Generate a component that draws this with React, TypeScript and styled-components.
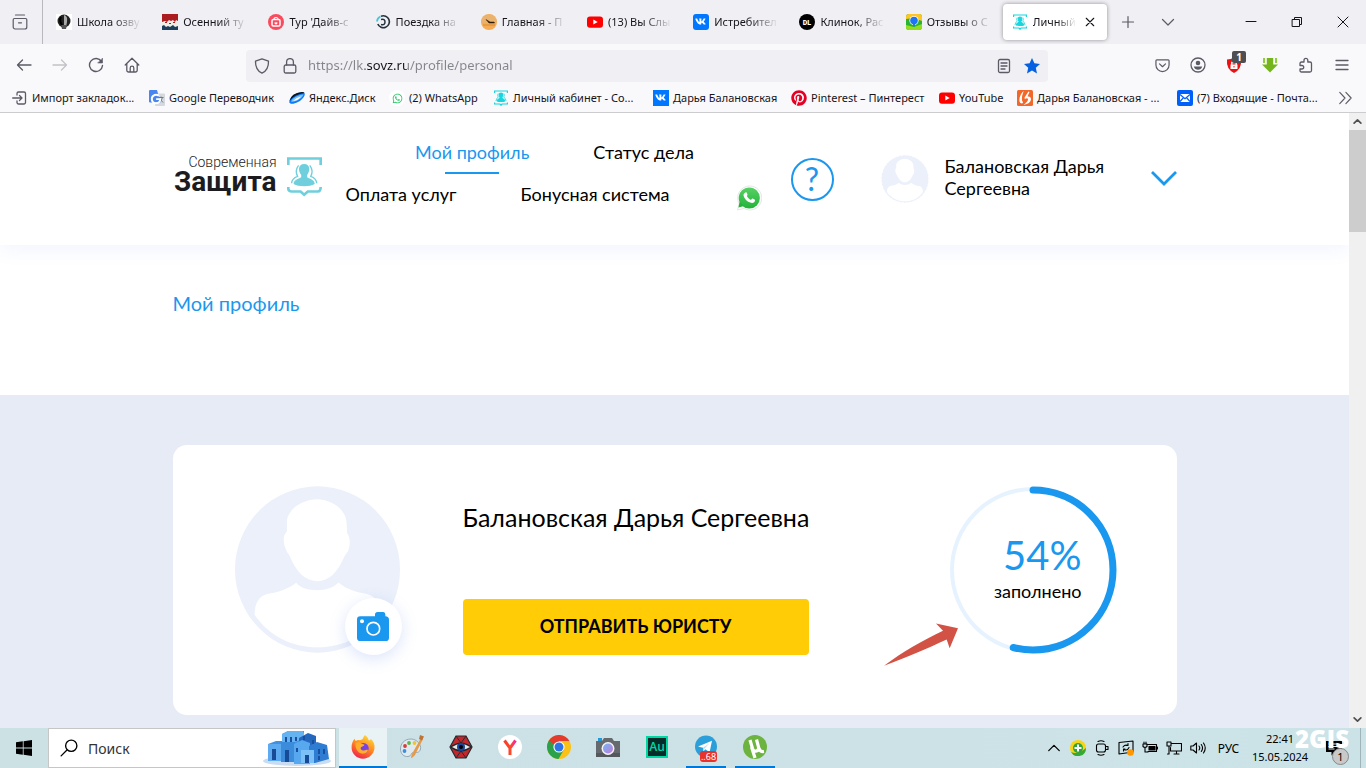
import React from 'react';
import styled, { createGlobalStyle, css } from 'styled-components';
import { FaWhatsapp, FaPinterest, FaVk, FaGoogle } from 'react-icons/fa';

const GlobalStyle = createGlobalStyle`
  *, *::before, *::after { box-sizing: border-box; }
  body { margin: 0; overflow: hidden; }
  ul { list-style: none; margin: 0; padding: 0; }
  a { color: inherit; text-decoration: none; }
  button { border: 0; padding: 0; background: none; color: inherit; font: inherit; cursor: pointer; }
  svg { display: block; flex: none; }
`;

const uiFont = `'Noto Sans', 'Open Sans', sans-serif`;
const siteFont = `Lato, 'Open Sans', sans-serif`;
const blue = '#1a97ee';

const Screen = styled.div`
  display: flex;
  flex-direction: column;
  height: 100vh;
  background: #fff;
  font-family: ${uiFont};
  font-size: 11px;
  color: #15141a;
`;

/* ---------- browser window ---------- */

const TabStrip = styled.div`
  display: flex;
  flex: none;
  height: 44px;
  background: #f0eff4;
`;
const RecentTabs = styled.button`
  display: grid;
  place-items: center;
  width: 43px;
  padding-right: 3px;
  border-right: 1px solid #b9b8bf;
  color: #5b5b66;
`;
const TabList = styled.ul`
  display: flex;
  flex: 1;
  min-width: 0;
  margin-left: 3px;
`;
const Tab = styled.li<{ $active?: boolean }>`
  display: flex;
  align-items: center;
  flex: 1 1 0;
  min-width: 0;
  gap: 5px;
  margin: 4px 1px;
  padding: 0 4px 0 9px;
  border-radius: 4px;
  ${p => p.$active && css`
    background: #fff;
    box-shadow: 0 0 4px rgba(0, 0, 0, 0.4);
  `}
`;
const TabLabel = styled.a`
  flex: 1;
  min-width: 0;
  overflow: hidden;
  white-space: nowrap;
  line-height: 20px;
  mask-image: linear-gradient(to right, #000 50%, transparent 92%);
`;
const CloseTab = styled.button`
  margin-right: 8px;
`;
const StripTools = styled.div`
  display: flex;
  align-items: center;
  width: 258px;
  color: #5b5b66;
`;
const StripButton = styled.button`
  display: grid;
  place-items: center;
  width: 40px;
  height: 40px;
`;
const WindowControls = styled.div`
  display: flex;
  margin-left: auto;
  color: #15141a;
`;
const WindowButton = styled.button`
  display: grid;
  place-items: center;
  width: 46px;
  height: 40px;
`;

const Toolbar = styled.div`
  display: flex;
  align-items: center;
  flex: none;
  height: 40px;
  padding: 0 6px;
  background: #f9f9fb;
`;
const ToolGroup = styled.div`
  display: flex;
  color: #5b5b66;
`;
const ToolButton = styled.button`
  position: relative;
  display: grid;
  place-items: center;
  width: 36px;
  height: 32px;
  padding-top: 2px;
  &:disabled { color: #c2c2c8; }
`;
const Counter = styled.span`
  position: absolute;
  top: 3px;
  right: 6px;
  width: 14px;
  height: 12px;
  border-radius: 2px;
  background: #4f4f52;
  color: #fff;
  font-size: 10px;
  font-weight: 700;
  line-height: 12px;
`;
const AddressBar = styled.form`
  display: flex;
  align-items: center;
  flex: 1;
  height: 32px;
  margin: 4px 96px 0;
  padding: 0 8px;
  gap: 12px;
  border-radius: 4px;
  background: #f0eff4;
  color: #5b5b66;
`;
const AddressInput = styled.input`
  flex: 1;
  min-width: 0;
  height: 24px;
  margin-left: -2px;
  padding: 0 0 2px;
  border: 0;
  outline: 0;
  font: 13px ${uiFont};
  color: transparent;
  background: linear-gradient(to right, #84848c 57px, #15141a 57px, #15141a 99px, #84848c 99px);
  background-clip: text;
  -webkit-background-clip: text;
`;

const BookmarksBar = styled.div`
  display: flex;
  align-items: center;
  flex: none;
  height: 29px;
  padding: 0 14px 0 12px;
  border-bottom: 1px solid #cccccf;
  background: #f9f9fb;
`;
const BookmarkList = styled.ul`
  display: flex;
  flex: 1;
  min-width: 0;
`;
const Bookmark = styled.li<{ $w: number }>`
  flex: none;
  width: ${p => p.$w}px;
`;
const BookmarkLink = styled.a`
  display: flex;
  align-items: center;
  gap: 4px;
  white-space: nowrap;
  line-height: 20px;
`;

/* ---------- site ---------- */

const Viewport = styled.div`
  display: flex;
  flex: 1;
  min-height: 0;
`;
const Page = styled.main`
  flex: 1;
  min-width: 0;
  overflow: hidden;
  background: #fff;
  font-family: ${siteFont};
  font-size: 18px;
  color: #000;
`;
const Container = styled.div`
  max-width: 1004px;
  margin: 0 auto;
`;
const SiteHeader = styled.header`
  position: relative;
  box-shadow: 0 4px 18px rgba(90, 130, 240, 0.09);
`;
const HeaderRow = styled(Container)`
  display: flex;
  align-items: center;
  height: 132px;
`;
const Logo = styled.a`
  display: flex;
  align-items: center;
  gap: 10px;
  width: 149px;
  margin-right: 23px;
  padding-bottom: 4px;
`;
const LogoText = styled.span`
  display: flex;
  flex-direction: column;
  width: 104px;
  padding-bottom: 6px;
  text-align: right;
  color: #1c1c20;
  font-family: Roboto, sans-serif;
`;
const LogoSmall = styled.span`
  font-size: 14px;
  font-weight: 300;
  line-height: 16px;
  white-space: nowrap;
`;
const LogoLarge = styled.span`
  font-size: 28px;
  font-weight: 700;
  line-height: 24px;
`;
const Nav = styled.nav`
  width: 420px;
  padding-bottom: 10px;
`;
const NavList = styled.ul`
  display: flex;
  flex-wrap: wrap;
  justify-content: center;
  column-gap: 64px;
`;
const NavItem = styled.li`
  display: flex;
  flex-direction: column;
  align-items: center;
  height: 42px;
  line-height: 40px;
  white-space: nowrap;
`;
const NavLink = styled.a<{ $active?: boolean }>`
  position: relative;
  color: ${p => (p.$active ? blue : '#000')};
  ${p => p.$active && css`
    &::after {
      content: '';
      position: absolute;
      left: 30px;
      right: 30px;
      bottom: -2px;
      height: 2px;
      background: ${blue};
    }
  `}
`;
const WhatsAppLink = styled.a`
  display: grid;
  place-items: end center;
  width: 30px;
  height: 37px;
`;
const HelpButton = styled.button`
  margin-left: 26px;
  width: 43px;
  height: 43px;
  border: 2px solid ${blue};
  border-radius: 50%;
  color: ${blue};
  font-size: 32px;
  line-height: 36px;
`;
const UserMenu = styled.button`
  display: flex;
  align-items: center;
  flex: 1;
  margin-left: 47px;
  gap: 16px;
  text-align: left;
  line-height: 22px;
`;
const UserName = styled.span`
  flex: 1;
  padding: 0 24px 4px 0;
`;
const TitleBand = styled(Container)`
  height: 150px;
  padding-top: 43px;
`;
const PageTitle = styled.h1`
  margin: 0;
  font-size: 20px;
  font-weight: 400;
  line-height: 30px;
  color: ${blue};
`;
const Band = styled.section`
  min-height: 100%;
  padding: 50px 0;
  background: #e7ebf5;
`;
const Card = styled(Container)`
  display: flex;
  align-items: flex-start;
  height: 270px;
  padding: 41px 60px 0 61px;
  border-radius: 14px;
  background: #fff;
`;
const PhotoBox = styled.div`
  position: relative;
  margin-right: 62px;
`;
const CameraButton = styled.button`
  position: absolute;
  right: -1px;
  bottom: -2px;
  display: grid;
  place-items: center;
  width: 57px;
  height: 57px;
  border-radius: 50%;
  background: #fff;
  box-shadow: 0 4px 16px rgba(90, 130, 230, 0.22);
`;
const Info = styled.div`
  width: 346px;
  padding-top: 15px;
`;
const FullName = styled.h2`
  margin: 0 0 66px;
  font-size: 25px;
  font-weight: 400;
  line-height: 32px;
  white-space: nowrap;
`;
const SendButton = styled.button`
  width: 100%;
  height: 56px;
  border-radius: 4px;
  background: #ffcc05;
  font-weight: 700;
  padding-bottom: 2px;
`;
const Progress = styled.div`
  position: relative;
  display: grid;
  margin-left: auto;
  > * { grid-area: 1 / 1; }
`;
const ProgressText = styled.div`
  align-self: center;
  display: flex;
  flex-direction: column;
  gap: 4px;
  padding: 0 35px 2px 0;
  text-align: right;
`;
const Percent = styled.strong`
  font-size: 40px;
  font-weight: 400;
  line-height: 40px;
  color: ${blue};
`;
const PercentLabel = styled.span`
  line-height: 24px;
`;
const Pointer = styled.svg`
  position: absolute;
  left: -65px;
  top: 137px;
`;

const ScrollTrack = styled.div`
  display: flex;
  flex-direction: column;
  width: 17px;
  background: #f0f0f0;
  color: #505050;
`;
const ScrollButton = styled.button`
  display: grid;
  place-items: center;
  height: 17px;
`;
const ScrollThumb = styled.div`
  height: 102px;
  margin-bottom: auto;
  background: #cdcdcd;
`;

/* ---------- taskbar ---------- */

const Taskbar = styled.footer`
  display: flex;
  flex: none;
  height: 40px;
  background: linear-gradient(to right, #cbe1e4, #cde2e6 60%, #cbe3e7);
  color: #000;
`;
const StartButton = styled.button`
  display: grid;
  place-items: center;
  width: 48px;
`;
const SearchBox = styled.label`
  display: flex;
  align-items: center;
  width: 288px;
  padding: 0 4px 0 11px;
  gap: 10px;
  border: 1px solid #c6c6c6;
  background: #fff;
`;
const SearchInput = styled.input`
  flex: 1;
  min-width: 0;
  padding: 0;
  border: 0;
  outline: 0;
  font: 14px ${uiFont};
  &::placeholder { color: #333; opacity: 1; }
`;
const TaskList = styled.ul`
  display: flex;
  gap: 1px;
  margin-left: 3px;
`;
const Task = styled.li<{ $open?: boolean; $focused?: boolean }>`
  display: flex;
  flex-direction: column;
  align-items: center;
  width: 48px;
  background: ${p => (p.$focused ? '#e9f2f4' : 'transparent')};
  &::after {
    content: '';
    width: ${p => (p.$focused ? '48px' : '40px')};
    height: 2px;
    background: ${p => (p.$open ? '#0078d7' : 'transparent')};
  }
`;
const TaskButton = styled.button`
  position: relative;
  display: grid;
  place-items: center;
  flex: 1;
  width: 48px;
`;
const TaskBadge = styled.span`
  position: absolute;
  left: 18px;
  bottom: 4px;
  width: 17px;
  height: 11px;
  border-radius: 3px;
  background: #e8322c;
  color: #fff;
  font-size: 9px;
  line-height: 11px;
`;
const Tray = styled.div`
  display: flex;
  align-items: center;
  margin-left: auto;
  padding-right: 5px;
`;
const TrayButton = styled.button`
  display: grid;
  place-items: center;
  width: 24px;
  height: 40px;
`;
const Language = styled.button`
  width: 37px;
  font-size: 12px;
`;
const Clock = styled.time`
  width: 66px;
  text-align: center;
  line-height: 18px;
`;
const Notices = styled.button`
  position: relative;
  display: grid;
  place-items: center;
  width: 48px;
  height: 40px;
  padding-right: 6px;
  border-right: 1px solid #9fb4b8;
`;
const NoticeCount = styled.span`
  position: absolute;
  left: 19px;
  top: 20px;
  width: 17px;
  height: 17px;
  border: 1px solid #888;
  border-radius: 50%;
  background: #c9c9c9;
  line-height: 15px;
`;
const Watermark = styled.span`
  position: absolute;
  right: 11px;
  top: 1px;
  color: #fff;
  font: 800 24px/20px 'Open Sans', sans-serif;
`;

/* ---------- icons ---------- */

type IconProps = { size?: number; w?: number; children: React.ReactNode; box?: string };
const Line = ({ size = 16, w = 1.3, children, box = '0 0 16 16' }: IconProps) => (
  <svg width={size} height={size} viewBox={box} fill="none" stroke="currentColor" strokeWidth={w} strokeLinecap="round" strokeLinejoin="round" aria-hidden="true">{children}</svg>
);
const Art = ({ size = 16, children, box = '0 0 16 16' }: IconProps) => (
  <svg width={size} height={size} viewBox={box} aria-hidden="true">{children}</svg>
);

const Sovz = () => (
  <Art>
    <g fill="none" stroke="#18d5de" strokeWidth="1.2">
      <path d="M1.6 3V1H14.4V3M1.6 12.6V14H7L8 15.2 9 14H14.4V12.6" />
      <path d="M5.2 3.5Q4.2 5 5.2 7 3 9 3 11M10.8 3.5Q11.8 5 10.8 7 13 9 13 11" strokeWidth=".8" />
    </g>
    <path fill="#18d5de" d="M8 2.6c3 0 2.6 3.400 1.400 5 .2 1 2.800 1.300 2.800 3.600-2 1.200-6.400 1.200-8.400 0 0-2.300 2.600-2.600 2.800-3.600C5.400 6 5 2.600 8 2.600z" />
  </Art>
);
const YouTube = () => (
  <Art><rect y="2.500" width="16" height="11.200" rx="3" fill="#f00" /><path d="M6.300 5.600v5l4.400-2.500z" fill="#fff" /></Art>
);
const Vk = ({ square }: { square?: boolean }) => (
  <Art><rect width="16" height="16" rx={square ? 0 : 3} fill="#07f" /><FaVk x={2} y={2} width={12} height={12} color="#fff" /></Art>
);
const School = () => (
  <Art><rect width="16" height="16" fill="#fff" /><ellipse cx="8" cy="7" rx="6.500" ry="6.500" fill="#222" /><path d="M8 1q4 1 3 7l-1 5H8z" fill="#aaa" /><path d="M5 11h6l-1 4H6z" fill="#555" /><path d="M5 3q-2 4 1 8" stroke="#000" strokeWidth="2" fill="none" /></Art>
);
const Autumn = () => (
  <Art><rect width="16" height="16" fill="#f0ece6" /><path d="M0 0h16v7l-2-1-1 2-2-2-2 1-2-1-2 2-2-1-3 1z" fill="#aa1c20" /><path d="M0 12l2-1 2 2 2-1 2 1 3-2 2 2 3-1v4H0z" fill="#1b3e5a" /><path d="M3 8.500h2M7 9.500h2M11 8.500h2" stroke="#aa1c20" /></Art>
);
const Dive = () => (
  <Art><circle cx="8" cy="8" r="8" fill="#fa4a5e" /><rect x="4" y="5.500" width="8" height="6.500" rx="1.300" fill="none" stroke="#fff" strokeWidth="1.500" /><path d="M6 5.500q0-2 2-2t2 2" fill="none" stroke="#fff" strokeWidth="1.200" /><path d="M8 10.800l-1.600-1.600q0-1.500 1.600-.7 1.600-.8 1.600.7z" fill="#fff" /></Art>
);
const Trip = () => (
  <Art><path d="M6 2.200A6 6 0 1 1 2.800 10" fill="none" stroke="#24323d" strokeWidth="1.600" /><path d="M2 7.500A6 6 0 0 1 5.500 2.500" fill="none" stroke="#49c4d8" strokeWidth="1.800" /><path d="M6 10.500q4 1 4-2.500T6 5.500" fill="none" stroke="#24323d" strokeWidth="1.500" /></Art>
);
const HomeTab = () => (
  <Art><circle cx="8" cy="8" r="8" fill="#f5ac55" /><path d="M0 9a8 8 0 0 1 16-1z" fill="#e9b36f" /><path d="M5 5.500l4 2.500h4l.5 1H8z" fill="#2c1c10" stroke="#2c1c10" strokeWidth=".5" /><path d="M2 11h12" stroke="#d78b36" /></Art>
);
const Blade = () => (
  <Art><circle cx="8" cy="8" r="8" fill="#000" /><text x="8" y="10.800" textAnchor="middle" fontFamily="Roboto" fontWeight="900" fontSize="7" fill="#fff">DL</text></Art>
);
const Reviews = () => (
  <Art><rect width="16" height="16" rx="3" fill="#27b531" /><path d="M0 5V3a3 3 0 0 1 3-3h10a3 3 0 0 1 3 3v4l-8-3z" fill="#ffc526" /><path d="M0 11l8 2 8-3v3a3 3 0 0 1-3 3H3a3 3 0 0 1-3-3z" fill="#95dc1e" /><circle cx="8" cy="6.500" r="4.600" fill="#fff" /><circle cx="8" cy="6.500" r="3.800" fill="#1e74f2" /><path d="M6.500 9.500h3L8 13z" fill="#1e74f2" /></Art>
);
const Translate = () => (
  <Art><rect x="6" y="3.500" width="10" height="12.500" rx="1" fill="#d5d8dc" /><path d="M9.500 7.500h5M12 6.500v1M13.500 7.500q-1 4-4 5M10.500 8.500l3.500 4" stroke="#6e7a88" fill="none" /><path d="M1 0h7l3.500 12.500H1a1 1 0 0 1-1-1V1a1 1 0 0 1 1-1z" fill="#4a86f0" /><FaGoogle x={1.5} y={3.500} width={6} height={6} color="#fff" /></Art>
);
const Disk = () => (
  <Art><path d="M.3 12.500C0 8 6 2.500 13 2 16.500 2 16.500 5 14 8 11 12 2 16 .3 12.500z" fill="#0a7cf5" /><path d="M2 11.500C4 7.500 9 5 14.500 4.500 13.500 8 6 13 2 11.500z" fill="#7cc2ff" /><path d="M4 11Q7 7.500 12 6.500 9 10.500 4 11z" fill="#fff" /><path d="M.4 11Q2 3 13 2q2 0 2.400 1Q6 4 .4 11z" fill="#10141f" /></Art>
);
const WhatsMark = () => (
  <Art><circle cx="8" cy="8" r="8" fill="#fff" /><FaWhatsapp x={3} y={3} width={10} height={10} color="#25c867" /></Art>
);
const Pinterest = () => <FaPinterest size={16} color="#e60023" aria-hidden="true" />;
const Livejournal = () => (
  <Art><rect width="16" height="16" rx="1.500" fill="#f2682a" /><path d="M6.800 1C3.500 3.500 2 8 2.500 11.500q.5 2 2.500 2 1-.5 1-1.500C4 10.500 5 5 6.800 1z" fill="#fff" /><path d="M11.500 1.500L7.500 7.500 7.800 9q3-1.500 3.200.3.200 2.200-4.500 5.700 7-1.500 7.500-5.500Q14 6 10.500 6.500L12.500 2z" fill="#fff" /></Art>
);
const Mail = () => (
  <Art><rect width="16" height="16" rx="2" fill="#005ff9" /><rect x="3" y="4" width="10" height="8" fill="#fff" /><path d="M3 4.500L8 8.800l5-4.300M3 11.500L6.200 8M13 11.500L9.800 8" stroke="#005ff9" strokeWidth="1.200" fill="none" /></Art>
);
const ImportIcon = () => (
  <Line w={1.300}><path stroke="#5b5b66" d="M5 5V3.500A1.500 1.500 0 0 1 6.500 2H12a1.500 1.500 0 0 1 1.500 1.500v9A1.500 1.500 0 0 1 12 14H6.500A1.500 1.500 0 0 1 5 12.500V11M.7 8H10M7.500 5.500L10 8l-2.500 2.500" /></Line>
);

const Avatar = ({ size, outline }: { size: number; outline?: boolean }) => (
  <svg width={size} height={size} viewBox="42 48 500 502" aria-hidden="true">
    <ellipse cx="292" cy="299" rx="248" ry="250" fill="#ebf0fa" stroke={outline ? '#fff' : 'none'} strokeWidth="9" strokeDasharray="26 14" />
    <path fill="#fff" d="M291 88C330 89 372 112 379 152L381 190C391 200 391 226 384 244L374 258C352 310 326 334 291 334 254 334 228 306 208 258 194 240 187 214 192 196L200 184V150C208 112 250 89 291 88z" />
    <path fill="#fff" d="M228 339C200 360 175 367 140 373 114 381 103 402 103 436 148 500 215 533 291 533 370 533 437 500 480 436 479 402 468 381 442 373 408 367 382 360 355 338 341 354 315 361 291 361 265 361 241 356 228 339z" />
  </svg>
);

const tabs = [
  { label: 'Школа озву', icon: <School /> },
  { label: 'Осенний ту', icon: <Autumn /> },
  { label: "Тур 'Дайв-с", icon: <Dive /> },
  { label: 'Поездка на', icon: <Trip /> },
  { label: 'Главная - П', icon: <HomeTab /> },
  { label: '(13) Вы Слы', icon: <YouTube /> },
  { label: 'Истребител', icon: <Vk /> },
  { label: 'Клинок, Рас', icon: <Blade /> },
  { label: 'Отзывы о С', icon: <Reviews /> },
];

const bookmarks = [
  { label: 'Импорт закладок...', icon: <ImportIcon />, w: 137 },
  { label: 'Google Переводчик', icon: <Translate />, w: 140 },
  { label: 'Яндекс.Диск', icon: <Disk />, w: 100 },
  { label: '(2) WhatsApp', icon: <WhatsMark />, w: 104 },
  { label: 'Личный кабинет - Со...', icon: <Sovz />, w: 160 },
  { label: 'Дарья Балановская', icon: <Vk square />, w: 138 },
  { label: 'Pinterest – Пинтерест', icon: <Pinterest />, w: 148 },
  { label: 'YouTube', icon: <YouTube />, w: 78 },
  { label: 'Дарья Балановская - ...', icon: <Livejournal />, w: 160 },
  { label: '(7) Входящие - Почта...', icon: <Mail />, w: 150 },
];

const tasks = [
  {
    name: 'Firefox', open: true, focused: true,
    icon: (
      <Art size={24} box="0 0 24 24">
        <defs>
          <linearGradient id="fx" x1=".8" y1="0" x2=".3" y2="1"><stop offset="0" stopColor="#ffe03a" /><stop offset=".5" stopColor="#ff8a1f" /><stop offset="1" stopColor="#f0234f" /></linearGradient>
        </defs>
        <path fill="url(#fx)" d="M14 0c2 1.500 3.200 3 3.700 5.200 1.500.3 2-.6 2-1.500C22.500 6 24 9.500 23.500 13 23 19 18 23.700 12 23.700S.8 19 .6 13C.4 9 1.700 6 3.600 3.700c.2 1 .6 1.700 1.200 2.200C6 5 7.500 5 8.700 5.300 10 5.200 11 4.500 12 3.500 12.500 2 13 1 14 0z" />
        <circle cx="12.300" cy="13.300" r="5.400" fill="#7642e5" />
        <path fill="#ffad2b" d="M4.500 8c2.500-1.500 5-.6 6 .8 1.400.2 2.500.5 3 1.200-.6 1.200-2.500 1.300-3.500 2.200-1 1.200 0 3 2 3.300 2.500.3 3.500-1 5-.6-.8 3-3.500 4.400-6.500 3.700C6.300 17.500 4 13 4.500 8z" />
      </Art>
    ),
  },
  {
    name: 'Paint',
    icon: (
      <Art size={26} box="0 0 26 26">
        <path d="M12 5C5 5 1.500 10 1.500 15S5 23 9 22.500s2.500-4 5.500-4 6 .5 7-3.500S18 5 12 5z" fill="#dfeaf0" stroke="#8399a8" strokeWidth=".8" />
        <circle cx="6" cy="12" r="1.900" fill="#d93c3c" /><circle cx="10" cy="9" r="1.900" fill="#58b947" /><circle cx="15.500" cy="9" r="1.900" fill="#f0c330" /><circle cx="5.500" cy="17" r="1.900" fill="#3c8fdf" />
        <path d="M22 4l2 1-8 16q-3 3.500-4 3 .2-2 1.500-5z" fill="#e39a49" /><path d="M21 1l4 1.500-2 4-3-1.500z" fill="#bf7437" />
      </Art>
    ),
  },
  {
    name: 'Просмотр',
    icon: (
      <Art size={24} box="0 0 24 24">
        <path d="M7 1h10l6 11-6 11H7L1 12z" fill="#c3272c" stroke="#252b30" strokeWidth="1.200" /><path d="M7 1l5 7 5-7M7 23l5-7 5 7M2 12l4-2M22 12l-4-2" stroke="#252b30" fill="none" />
        <path d="M1 12q11-9 22 0-11 9-22 0z" fill="#20262c" /><path d="M3 12q9-6 18 0-9 6-18 0z" fill="#e9e5e2" /><circle cx="12" cy="12" r="4" fill="#16479c" /><circle cx="12" cy="12" r="2" fill="#000" />
      </Art>
    ),
  },
  {
    name: 'Яндекс',
    icon: (
      <Art size={24} box="0 0 24 24">
        <defs><linearGradient id="ya" gradientUnits="userSpaceOnUse" x1="6" y1="0" x2="18" y2="0"><stop offset="0" stopColor="#ff3a23" /><stop offset=".6" stopColor="#fb4a2c" /><stop offset="1" stopColor="#f222bb" /></linearGradient></defs>
        <circle cx="12" cy="12" r="12" fill="#fff" /><path d="M6.500 5.500L12 13v7M12 13l5.500-7.500" fill="none" stroke="url(#ya)" strokeWidth="3" />
      </Art>
    ),
  },
  {
    name: 'Chrome',
    icon: (
      <Art size={24} box="0 0 24 24">
        <circle cx="12" cy="12" r="12" fill="#fbc116" /><path d="M12 12L1.600 6A12 12 0 0 1 22.400 6H12z" fill="#e33b2e" /><path d="M1.600 6A12 12 0 0 0 11.500 24L17 14.500 12 12z" fill="#2aa14b" /><path d="M1.600 6L7 15l5-9z" fill="#e33b2e" /><path d="M1.600 6l5.200 9L12 12z" fill="#2aa14b" />
        <circle cx="12" cy="12" r="5.600" fill="#fff" /><circle cx="12" cy="12" r="4.500" fill="#2e74e8" />
      </Art>
    ),
  },
  {
    name: 'Камера',
    icon: (
      <Art size={24} box="0 0 24 24">
        <defs><linearGradient id="lens" x1="0" y1="0" x2="1" y2="1"><stop offset="0" stopColor="#72b7f5" /><stop offset="1" stopColor="#c47ad8" /></linearGradient></defs>
        <path d="M2 3h4v3H2z" fill="#1f9ad8" /><path d="M0 6h6l2-3h8l2 3h6v16H0z" fill="#66696e" /><path d="M0 18h24v4H0z" fill="#54575b" /><circle cx="12" cy="13.500" r="6.500" fill="#f2f3f5" /><circle cx="12" cy="13.500" r="5" fill="url(#lens)" />
      </Art>
    ),
  },
  {
    name: 'Audition',
    icon: (
      <Art size={22} box="0 0 22 22">
        <rect x="1" y="1" width="20" height="20" fill="#062c2a" stroke="#00d8a4" strokeWidth="2" /><text x="11" y="15" textAnchor="middle" fontFamily="Open Sans" fontWeight="600" fontSize="12" fill="#00d8a4">Au</text>
      </Art>
    ),
  },
  {
    name: 'Telegram', open: true, badge: '..68',
    icon: (
      <Art size={24} box="0 0 24 24"><circle cx="12" cy="11.500" r="11" fill="#2a9fda" /><path d="M4 11.500L18 5.800l-2.400 11.500-4.200-3-2 2-.4-3.500z" fill="#fff" /><path d="M9 12.800l6.500-4.500-5 5.300-1 2.700z" fill="#b9d9ec" /></Art>
    ),
  },
  {
    name: 'uTorrent', open: true,
    icon: (
      <Art size={24} box="0 0 24 24"><circle cx="12" cy="12" r="12" fill="#6db33f" /><path d="M7 5l2.500 8.500q1.200 3.500 4 2.500t2-4L13.500 4.500M15.500 12l1 2.500q1.200 2.500 4.500 2M8.500 12l3.500 11" fill="none" stroke="#fff" strokeWidth="3.200" /></Art>
    ),
  },
];

const SearchArt = () => (
  <svg width="68" height="36" viewBox="0 0 68 36" aria-hidden="true">
    <ellipse cx="34" cy="31" rx="34" ry="5" fill="#c9dcf2" />
    <path d="M5 14l8-3h6V4l6-3h16l-3 30H5z" fill="#3f92e2" /><path d="M19 4l6-3h15v8l-8 3H19z" fill="#66b3f2" />
    <path d="M5 14h13v17H5z" fill="#5eaaf0" /><path d="M18 12h14v20H18z" fill="#3c8cdc" />
    <path d="M36 8l9-5 8 3v25H36z" fill="#2467bd" /><path d="M31 14l8-4 8 3v21H31z" fill="#57a8ef" />
    <path d="M46 16l8-4 10 3 2 14-14 4h-6z" fill="#2f7dd2" /><path d="M38 20h13v13H38z" fill="#7bc0f7" />
    <path d="M9 19h4v11H9zM22 20h4v12h-4zM42 25h4v8h-4z" fill="#174b98" />
    <path d="M23 7v5M28 7v5M33 7v4M41 6v4M50 10v4M56 19v5M61 19v5M34 18v4M56 26v4" stroke="#184f9f" strokeWidth="2" />
  </svg>
);

export default function App() {
  return (
    <Screen>
      <GlobalStyle />
      <TabStrip>
        <RecentTabs aria-label="Недавние вкладки">
          <Line w={1.200}><path d="M3.500 1h9M2.500 4.500h11q1.300 0 1.300 1.300v7.200a2 2 0 0 1-2 2H3.200a2 2 0 0 1-2-2V5.800q0-1.300 1.300-1.300zM6.500 8.800h3" /></Line>
        </RecentTabs>
        <TabList>
          {tabs.map(t => (
            <Tab key={t.label}>{t.icon}<TabLabel href="#">{t.label}</TabLabel></Tab>
          ))}
          <Tab $active>
            <Sovz />
            <TabLabel href="#">Личный</TabLabel>
            <CloseTab aria-label="Закрыть вкладку"><Line size={10}><path d="M2 2l12 12M14 2L2 14" strokeWidth="1.800" stroke="#15141a" /></Line></CloseTab>
          </Tab>
        </TabList>
        <StripTools>
          <StripButton aria-label="Новая вкладка"><Line w={1.200}><path d="M8 2.500v11M2.500 8h11" /></Line></StripButton>
          <StripButton aria-label="Все вкладки"><Line w={1.200}><path d="M2.500 5.500L8 11l5.500-5.500" /></Line></StripButton>
          <WindowControls>
            <WindowButton aria-label="Свернуть"><Line w={1}><path d="M3 7.500h10" /></Line></WindowButton>
            <WindowButton aria-label="Восстановить"><Line w={1}><path d="M3.500 5.500h7v7h-7zM5.500 5.500v-2h7v7h-2" /></Line></WindowButton>
            <WindowButton aria-label="Закрыть"><Line w={1}><path d="M3 3l10 10M13 3L3 13" /></Line></WindowButton>
          </WindowControls>
        </StripTools>
      </TabStrip>

      <Toolbar>
        <ToolGroup>
          <ToolButton aria-label="Назад"><Line><path d="M15 8H1.500M6.500 3l-5 5 5 5" /></Line></ToolButton>
          <ToolButton aria-label="Вперёд" disabled><Line><path d="M1 8h13.500M9.500 3l5 5-5 5" /></Line></ToolButton>
          <ToolButton aria-label="Обновить"><Line w={1.400}><path d="M13.500 4.500A6.500 6.500 0 1 0 14.500 8.500" /><path d="M14.500 1.500v4.500H10z" fill="currentColor" strokeWidth=".6" /></Line></ToolButton>
          <ToolButton aria-label="Домой"><Line><path d="M1.200 8L8 1.300 14.800 8M2.800 6.700v6.500A1.800 1.800 0 0 0 4.600 15h6.800a1.800 1.800 0 0 0 1.800-1.800V6.700M6.200 15v-4a1.800 1.800 0 0 1 3.600 0v4" /></Line></ToolButton>
        </ToolGroup>
        <AddressBar>
          <Line><path d="M8 .8l6.500 2.400c.2 6-2 9.800-6.500 12C3.500 13 1.300 9.200 1.500 3.200z" /></Line>
          <Line><rect x="2.200" y="7" width="11.600" height="8" rx="1.500" /><path d="M4.600 7V4a3.400 3.400 0 0 1 6.800 0v3" /></Line>
          <AddressInput aria-label="Адрес" defaultValue="https://lk.sovz.ru/profile/personal" />
          <Line><rect x="2.500" y="1.500" width="11" height="13" rx="1.500" /><path d="M5 5h6M5 8h6M5 11h4" /></Line>
          <Art><path d="M8 0l2.400 5.300 5.600.6-4.200 3.900L13 15.500 8 12.600l-5 2.900 1.200-5.700L0 5.900l5.600-.6z" fill="#0561e0" /></Art>
        </AddressBar>
        <ToolGroup>
          <ToolButton aria-label="Pocket"><Line size={15}><path d="M2 2h12a1 1 0 0 1 1 1v4.500a7 7 0 0 1-14 0V3a1 1 0 0 1 1-1zM4.800 6.300L8 9.300l3.200-3" /></Line></ToolButton>
          <ToolButton aria-label="Аккаунт"><Line><circle cx="8" cy="8" r="7" /><circle cx="8" cy="6" r="2.300" fill="currentColor" stroke="none" /><path d="M3.800 9.500h8.400q-1 3.300-4.200 3.300T3.800 9.500z" fill="currentColor" stroke="none" /></Line></ToolButton>
          <ToolButton aria-label="Блокировщик"><Art><path d="M8 .5Q11 2.500 15 2.500 16 12 8 16 0 12 1 2.500 5 2.500 8 .5z" fill="#ee1111" /><path d="M4.500 7.500h7v4.500h-7z" fill="#fff" /><path d="M5.800 8V5.500h4.400V8" fill="none" stroke="#fff" strokeWidth="1.300" /><path d="M7.500 9h1v1.500h-1z" fill="#ee1111" /></Art><Counter>1</Counter></ToolButton>
          <ToolButton aria-label="Загрузка"><Art><path d="M4.800 1h6.400v6.500H16l-8 8-8-8h4.800z" fill="#74b51c" /><path d="M1 1h2v5H1zM13 1h2v5h-2z" fill="#93cc3e" /></Art></ToolButton>
          <ToolButton aria-label="Расширения"><Line><path d="M2 8.500V6.500Q2 5 3.500 5H6V3.200a1.800 1.800 0 0 1 3.800 0V5H12q1.500 0 1.500 1.500v7Q13.500 15 12 15H3.500Q2 15 2 13.500v-1.500H4a1.700 1.700 0 0 0 0-3.500z" /></Line></ToolButton>
          <ToolButton aria-label="Меню"><Line><path d="M2 3.500h12M2 8h12M2 12.500h12" /></Line></ToolButton>
        </ToolGroup>
      </Toolbar>

      <BookmarksBar>
        <BookmarkList>
          {bookmarks.map(b => (
            <Bookmark key={b.label} $w={b.w}><BookmarkLink href="#">{b.icon}{b.label}</BookmarkLink></Bookmark>
          ))}
        </BookmarkList>
        <button aria-label="Другие закладки"><Line size={14}><path d="M2 1.500L8 8l-6 6.500M9 1.500L15 8l-6 6.500" stroke="#5b5b66" /></Line></button>
      </BookmarksBar>

      <Viewport>
        <Page>
          <SiteHeader>
            <HeaderRow>
              <Logo href="#">
                <LogoText><LogoSmall>Современная</LogoSmall><LogoLarge>Защита</LogoLarge></LogoText>
                <svg width="35" height="40" viewBox="381 84 106 120" aria-hidden="true">
                  <g fill="none" stroke="#70cfdc">
                    <path d="M385 108V88H483V108M385 174V180Q386 188 395 188H422L433 198 444 188H474Q483 187 483 174" strokeWidth="8" />
                    <path d="M416 109Q404 125 413 142 396 148 395 163M450 109Q462 125 453 142 470 148 471 163" strokeWidth="4" />
                  </g>
                  <path fill="#70cfdc" d="M433 105C452 105 452 126 442 138V145C452 151 464 152 465 165 450 174 416 174 401 165 402 152 414 151 424 145V138C414 126 414 105 433 105z" />
                </svg>
              </Logo>
              <Nav>
                <NavList>
                  <NavItem><NavLink $active href="#">Мой профиль</NavLink></NavItem>
                  <NavItem><NavLink href="#">Статус дела</NavLink></NavItem>
                  <NavItem><NavLink href="#">Оплата услуг</NavLink></NavItem>
                  <NavItem><NavLink href="#">Бонусная система</NavLink></NavItem>
                  <NavItem>
                    <WhatsAppLink href="#" aria-label="WhatsApp">
                      <svg width="26" height="26" viewBox="0 0 26 26">
                        <defs><linearGradient id="wa" x1="0" y1="0" x2="0" y2="1"><stop offset="0" stopColor="#57d163" /><stop offset="1" stopColor="#23b33a" /></linearGradient></defs>
                        <path d="M13.500 1a12 12 0 1 1-5.500 22.500L1.500 25l1.600-6.300A12 12 0 0 1 13.500 1z" fill="#fff" stroke="#dedede" strokeWidth=".8" />
                        <circle cx="13.300" cy="13" r="10.600" fill="url(#wa)" />
                        <path d="M3.500 17l-1 5.500 5.500-1.500z" fill="#23b33a" />
                        <path d="M9.500 7.500c.8-.5 1.300 0 1.700 1.300.5 1.200.4 1.400-.4 2.300 1 2 2.200 3 4.200 3.800.8-.8 1.200-1.500 1.700-1.300l2.300 1.200c.4 2-1.400 3.300-3 3.300-4.500-.8-8-4-8.500-8 0-1 .9-2.200 2-2.600z" fill="#fff" />
                      </svg>
                    </WhatsAppLink>
                  </NavItem>
                </NavList>
              </Nav>
              <HelpButton aria-label="Помощь">?</HelpButton>
              <UserMenu>
                <Avatar size={48} outline />
                <UserName>Балановская Дарья Сергеевна</UserName>
                <svg width="26" height="16" viewBox="0 0 26 16" fill="none" stroke={blue} strokeWidth="2.800" aria-hidden="true"><path d="M1 1l12 12L25 1" /></svg>
              </UserMenu>
            </HeaderRow>
          </SiteHeader>

          <TitleBand as="div"><PageTitle>Мой профиль</PageTitle></TitleBand>

          <Band>
            <Card>
              <PhotoBox>
                <Avatar size={167} />
                <CameraButton aria-label="Загрузить фото">
                  <svg width="32" height="29" viewBox="0 0 96 87" aria-hidden="true">
                    <path d="M10 13H54V8Q54 0 62 0H78Q85 0 85 8V13Q96 14 96 23V77Q96 87 86 87H10Q0 87 0 77V23Q0 13 10 13z" fill={blue} />
                    <circle cx="15" cy="28" r="6" fill="#fff" /><circle cx="49" cy="50" r="19" fill="none" stroke="#fff" strokeWidth="5" />
                  </svg>
                </CameraButton>
              </PhotoBox>
              <Info>
                <FullName>Балановская Дарья Сергеевна</FullName>
                <SendButton>ОТПРАВИТЬ ЮРИСТУ</SendButton>
              </Info>
              <Progress>
                <svg width="168" height="168" viewBox="0 0 168 168" fill="none" aria-hidden="true">
                  <circle cx="84" cy="84" r="81" stroke="#e6f3ff" strokeWidth="4" />
                  <circle cx="84" cy="84" r="80" stroke={blue} strokeWidth="7" strokeLinecap="round" pathLength="100" strokeDasharray="54 100" transform="rotate(-90 84 84)" />
                </svg>
                <ProgressText><Percent>54%</Percent><PercentLabel>заполнено</PercentLabel></ProgressText>
                <Pointer width="74" height="43" viewBox="0 0 222 128" aria-hidden="true">
                  <path d="M0 128C60 84 110 55 177 23L156 1 222 15 197 75 188 49C130 76 70 101 0 128z" fill="#d25345" />
                </Pointer>
              </Progress>
            </Card>
          </Band>
        </Page>
        <ScrollTrack>
          <ScrollButton aria-label="Вверх"><Line size={9} w={3}><path d="M2 11l6-6 6 6" /></Line></ScrollButton>
          <ScrollThumb />
          <ScrollButton aria-label="Вниз"><Line size={9} w={3}><path d="M2 5l6 6 6-6" /></Line></ScrollButton>
        </ScrollTrack>
      </Viewport>

      <Taskbar>
        <StartButton aria-label="Пуск"><Art><path d="M0 2.200L6.800 1.300v6.300H0zM7.600 1.200L16 0v7.600H7.600zM0 8.400h6.800v6.300L0 13.800zM7.600 8.400H16V16l-8.400-1.200z" fill="#000" /></Art></StartButton>
        <SearchBox>
          <Line size={18} w={1.200}><circle cx="10" cy="6" r="5" /><path d="M6.200 9.800L1 15" /></Line>
          <SearchInput placeholder="Поиск" aria-label="Поиск" />
          <SearchArt />
        </SearchBox>
        <TaskList>
          {tasks.map(t => (
            <Task key={t.name} $open={t.open} $focused={t.focused}>
              <TaskButton aria-label={t.name}>{t.icon}{t.badge && <TaskBadge>{t.badge}</TaskBadge>}</TaskButton>
            </Task>
          ))}
        </TaskList>
        <Tray>
          <TrayButton aria-label="Скрытые значки"><Line size={14} w={1.500}><path d="M2 11l6-6 6 6" /></Line></TrayButton>
          <TrayButton aria-label="Защита"><Art><circle cx="8" cy="8" r="8" fill="#f7d515" /><path d="M16 8A8 8 0 0 1 1 12Q8 15 16 8z" fill="#34a83a" /><circle cx="8" cy="8" r="5" fill="#2fa43b" /><path d="M8 4.500v7M4.500 8h7" stroke="#fff" strokeWidth="2" /></Art></TrayButton>
          <TrayButton aria-label="Камера"><Line w={1.100}><rect x="2.500" y="4" width="9" height="8" rx="2" /><path d="M11.500 6.500h2.500v3h-2.500M4 1.500q3-1.500 6 0M4 14.500q3 1.500 6 0" /></Line></TrayButton>
          <TrayButton aria-label="Обновления"><Line w={1.100}><path d="M1 2.500L15 1v11L1 14zM5 7q2-3 5-1.500M10 3.500v2H8M11 7.500q-1.500 3.500-5 2M5.500 11V9H7" /><circle cx="12.500" cy="12.500" r="3.300" fill="#ff9800" stroke="none" /></Line></TrayButton>
          <TrayButton aria-label="Батарея"><Line w={1.100}><path d="M5 4.500h9.500v7H6" /><path d="M7 6.500h6v3.500H7z" fill="currentColor" /><path d="M15.500 7v2M1 4h4v2.500q-2 2-4 0zM2 4V2M4 4V2M3 7.500V12h3" /></Line></TrayButton>
          <TrayButton aria-label="Сеть"><Line w={1.100}><path d="M5 3.500h10.500v7.500H4.500V7.500M8 14h5M10.500 11v3M1 2h4v4H1zM3 6v8H1.500" /></Line></TrayButton>
          <TrayButton aria-label="Звук"><Line w={1.100}><path d="M.8 6v4H3l3.500 3V3L3 6zM9 6q1.500 2 0 4M11.300 4.500q2.500 3.500 0 7M13.500 3q3.500 5 0 10" /></Line></TrayButton>
          <Language>РУС</Language>
          <Clock>22:41<br />15.05.2024</Clock>
          <Notices aria-label="Уведомления">
            <Art><path d="M0 1h16v11H9l-3.500 3.500V12H0z" fill="#000" /><path d="M2.500 4h11M2.500 6.500h11M2.500 9h6" stroke="#dfeaec" strokeWidth="1" /></Art>
            <Watermark>2GIS</Watermark>
            <NoticeCount>1</NoticeCount>
          </Notices>
        </Tray>
      </Taskbar>
    </Screen>
  );
}
